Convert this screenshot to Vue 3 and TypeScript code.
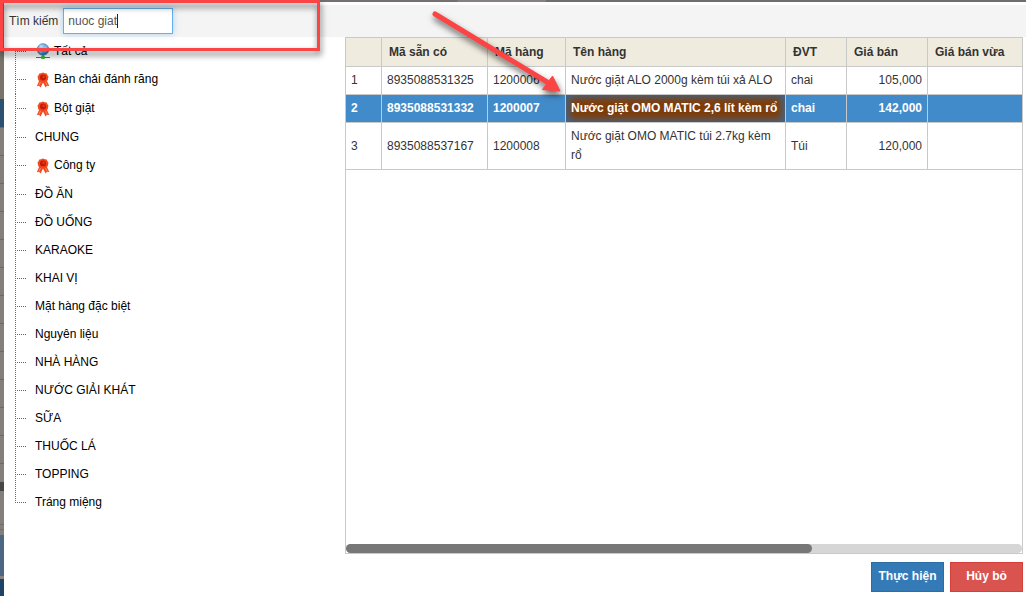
<script setup lang="ts">
import { computed, onMounted, ref } from 'vue'

interface Category {
  name: string
  icon?: 'globe' | 'ribbon'
}

interface Product {
  barcode: string
  code: string
  name: string
  unit: string
  price: string
}

const keyword = ref('nuoc giat')
const selected = ref(1)
const searchBox = ref<HTMLInputElement | null>(null)

const INPUT_INSET = 5
const pen = document.createElement('canvas').getContext('2d')

const caretLeft = computed(() => {
  if (!pen) return `${INPUT_INSET}px`
  pen.font = '12px "Liberation Sans", Arial, sans-serif'
  return `${INPUT_INSET + Math.ceil(pen.measureText(keyword.value).width)}px`
})

const categories: Category[] = [
  { name: 'Tất cả', icon: 'globe' },
  { name: 'Bàn chải đánh răng', icon: 'ribbon' },
  { name: 'Bột giặt', icon: 'ribbon' },
  { name: 'CHUNG' },
  { name: 'Công ty', icon: 'ribbon' },
  { name: 'ĐỒ ĂN' },
  { name: 'ĐỒ UỐNG' },
  { name: 'KARAOKE' },
  { name: 'KHAI VỊ' },
  { name: 'Mặt hàng đặc biệt' },
  { name: 'Nguyên liệu' },
  { name: 'NHÀ HÀNG' },
  { name: 'NƯỚC GIẢI KHÁT' },
  { name: 'SỮA' },
  { name: 'THUỐC LÁ' },
  { name: 'TOPPING' },
  { name: 'Tráng miệng' },
]

const products: Product[] = [
  { barcode: '8935088531325', code: '1200006', name: 'Nước giặt ALO 2000g kèm túi xả ALO', unit: 'chai', price: '105,000' },
  { barcode: '8935088531332', code: '1200007', name: 'Nước giặt OMO MATIC 2,6 lít kèm rổ', unit: 'chai', price: '142,000' },
  { barcode: '8935088537167', code: '1200008', name: 'Nước giặt OMO MATIC túi 2.7kg kèm rổ', unit: 'Túi', price: '120,000' },
]

onMounted(() => searchBox.value?.focus())
</script>

<template>
  <div class="page">
    <div class="backdrop" aria-hidden="true"></div>
    <section class="dialog" role="dialog" aria-label="Tìm kiếm">
      <header class="search">
        <label for="keyword">Tìm kiếm</label>
        <span class="field">
          <input id="keyword" ref="searchBox" v-model="keyword" type="text" autocomplete="off" spellcheck="false" />
          <span class="caret" :style="{ left: caretLeft }"></span>
        </span>
      </header>

      <div class="body">
        <ul class="tree">
          <li v-for="c in categories" :key="c.name" :class="{ leaf: c.icon === 'ribbon' }">
            <span class="branch"></span>
            <svg v-if="c.icon === 'globe'" class="icon" viewBox="0 0 16 16">
              <defs>
                <radialGradient id="globe-fill" cx="40%" cy="30%" r="70%">
                  <stop offset="0" stop-color="#b4dcf8" />
                  <stop offset="0.6" stop-color="#5aa5de" />
                  <stop offset="1" stop-color="#2468ab" />
                </radialGradient>
              </defs>
              <circle cx="8" cy="6.500" r="5.800" fill="url(#globe-fill)" stroke="#3578b5" stroke-width="0.7" />
              <path d="M4 3c2-2 3-1 4-1l-1 2-2 2zM9 4l3-1 1 3-2 3-2-2zM4 8l3 1-1 2z" fill="#d8effc" opacity="0.4" />
              <path d="M1 14.500h14M8 12v2" stroke="#666" stroke-width="1" />
              <rect x="6" y="13" width="4" height="3" rx="1" fill="#35b832" />
            </svg>
            <svg v-else-if="c.icon === 'ribbon'" class="icon" viewBox="0 0 16 16">
              <path d="M4.500 8 1.800 14.200l2.200-.4 1.600 1.800L8 10.500l2.600 5.100 1.300-1.900 2.400.4L11.500 8z" fill="#f24a22" />
              <path d="M5.500 10 4 13.200M10.500 10l1.600 3.200" stroke="#ff9468" stroke-width="0.9" />
              <path d="M8 .6l1.800.7 1.900.2.8 1.700 1 1.500-.5 1.700-.2 1.800-1.600.9L9.800 10.300 8 10l-1.800.3-1.400-1.200-1.600-.9L3 6.400l-.5-1.700 1-1.500.8-1.700 1.900-.2z" fill="#f04a20" />
              <circle cx="8" cy="5.400" r="3" fill="#c81806" />
              <circle cx="8.600" cy="4.800" r="1.200" fill="#e63a1a" />
            </svg>
            <span>{{ c.name }}</span>
          </li>
        </ul>

        <div class="results">
          <div class="grid">
            <table>
              <colgroup>
                <col class="w-index" />
                <col class="w-barcode" />
                <col class="w-code" />
                <col class="w-name" />
                <col class="w-unit" />
                <col class="w-price" />
                <col />
              </colgroup>
              <thead>
                <tr>
                  <th></th>
                  <th>Mã sẵn có</th>
                  <th>Mã hàng</th>
                  <th>Tên hàng</th>
                  <th>ĐVT</th>
                  <th>Giá bán</th>
                  <th>Giá bán vừa</th>
                </tr>
              </thead>
              <tbody>
                <tr v-for="(p, i) in products" :key="p.code" :class="{ selected: i === selected }" @click="selected = i">
                  <td>{{ i + 1 }}</td>
                  <td>{{ p.barcode }}</td>
                  <td>{{ p.code }}</td>
                  <td class="name"><span>{{ p.name }}</span></td>
                  <td>{{ p.unit }}</td>
                  <td class="price">{{ p.price }}</td>
                  <td></td>
                </tr>
              </tbody>
            </table>
            <div class="scroll-track"><div class="scroll-thumb"></div></div>
          </div>
          <footer class="actions">
            <button type="button" class="primary">Thực hiện</button>
            <button type="button" class="danger">Hủy bỏ</button>
          </footer>
        </div>
      </div>
    </section>

    <div class="callout" aria-hidden="true"></div>
    <svg class="arrow" viewBox="0 0 150 100" aria-hidden="true">
      <path d="M11 10 123 78" stroke="#fb4545" stroke-width="5" stroke-linecap="round" />
      <path d="M128.500 72 136 87 118.500 85.500z" fill="#fb4545" stroke="#fb4545" stroke-width="1" />
    </svg>
  </div>
</template>

<style>
body {
  margin: 0;
}
</style>

<style scoped>
.page {
  box-sizing: border-box;
  position: relative;
  display: flex;
  min-height: 100vh;
  padding-top: 2px;
  overflow: hidden;
  background: linear-gradient(90deg, #767171 0 458px, #858181 458px 546px, #706d6d 546px) top / 100% 2px no-repeat #fff;
  color: #333;
  font: 12px/19px "Liberation Sans", Arial, sans-serif;
}

.backdrop {
  flex: none;
  width: 4px;
  margin-bottom: 8px;
  background: linear-gradient(
      #78736b 0 97px,
      #2b5072 97px 125px,
      transparent 125px 480px,
      #484644 480px 489px,
      #827f7c 489px 522px,
      #716e6c 522px 523px,
      #827f7c 523px 527px,
      #716e6c 527px 528px,
      #827f7c 528px 533px,
      #4c6783 533px 574px,
      #85827f 574px 577px,
      #1e4268 577px
    ),
    repeating-linear-gradient(#827f7c 0 13px, #6b6866 13px 14px, #827f7c 14px 28px);
}

.dialog {
  display: flex;
  flex: 1;
  flex-direction: column;
  min-width: 0;
  padding-top: 3px;
  background: #fff;
}

.search {
  display: flex;
  align-items: center;
  gap: 5px;
  height: 32px;
  padding-left: 5px;
  background: #f4f4f4;
}

.field {
  position: relative;
  display: flex;
}

.field input {
  box-sizing: border-box;
  width: 110px;
  height: 26px;
  padding: 0 4px;
  border: 1px solid #66afe9;
  outline: none;
  background: #fff;
  box-shadow: 0 0 6px rgba(102, 175, 233, 0.5);
  caret-color: transparent;
  color: #555;
  font: inherit;
}

.caret {
  position: absolute;
  top: 6px;
  width: 1px;
  height: 14px;
  background: #222;
  pointer-events: none;
}

.body {
  display: flex;
  flex: 1;
}

.tree {
  flex: none;
  width: 341px;
  margin: 0;
  padding: 0;
  color: #000;
  list-style: none;
}

.tree li {
  display: flex;
  align-items: center;
  height: 28px;
  padding-left: 11px;
}

.tree li.leaf {
  height: 29px;
}

.branch {
  align-self: stretch;
  width: 11px;
  margin-right: 9px;
  background: repeating-linear-gradient(90deg, #666 0 1px, transparent 1px 2px) 0 14px / 100% 1px no-repeat,
    repeating-linear-gradient(#666 0 1px, transparent 1px 2px) 0 0 / 1px 100% no-repeat;
}

.tree li:first-child .branch {
  background-position: 0 14px;
}

.tree li:last-child .branch {
  background-size: 100% 1px, 1px 14px;
}

.icon {
  width: 16px;
  height: 16px;
  margin-right: 3px;
}

.results {
  display: flex;
  flex: 1;
  flex-direction: column;
  min-width: 0;
  padding: 0 3px 12px 0;
}

.grid {
  display: flex;
  flex: 1;
  flex-direction: column;
  justify-content: space-between;
  border: 1px solid #c9c9c9;
}

table {
  width: 100%;
  border-spacing: 0;
  table-layout: fixed;
}

.w-index { width: 36px; }
.w-barcode { width: 106px; }
.w-code { width: 78px; }
.w-name { width: 220px; }
.w-unit { width: 61px; }
.w-price { width: 81px; }

th,
td {
  padding: 4px 5px;
  border-right: 1px solid #c9c9c9;
  border-bottom: 1px solid #c9c9c9;
  text-align: left;
}

th {
  padding: 5px 4px 4px 7px;
  background: #efebdf;
  white-space: nowrap;
}

th:last-child,
td:last-child {
  border-right: 0;
}

.price {
  text-align: right;
}

.selected td {
  background: #428bca;
  color: #fff;
  font-weight: bold;
}

.selected .name {
  overflow: hidden;
  background: #456482;
  white-space: nowrap;
}

.selected .name span {
  position: relative;
  z-index: 0;
  display: block;
}

/* soft glow behind the highlighted product name */
.selected .name span::before {
  position: absolute;
  z-index: -1;
  inset: 0;
  background: #7f3c08;
  box-shadow: 0 0 3px 1px #7f3c08;
  content: "";
  filter: blur(3px);
}

.scroll-track {
  height: 9px;
  border-radius: 5px;
  background: #d6d6d6;
}

.scroll-thumb {
  width: 69%;
  height: 100%;
  border-radius: 5px;
  background: #777;
}

.actions {
  display: flex;
  justify-content: flex-end;
  gap: 6px;
  padding-top: 8px;
}

.actions button {
  box-sizing: border-box;
  width: 73px;
  height: 30px;
  padding: 0 0 2px;
  border: 1px solid #2e6da4;
  background: #337ab7;
  color: #fff;
  font: bold 12px/19px "Liberation Sans", Arial, sans-serif;
}

.actions .danger {
  border-color: #d43f3a;
  background: #d9534f;
}

.callout {
  position: absolute;
  top: 0;
  left: 0;
  box-sizing: border-box;
  width: 320px;
  height: 51px;
  border: 3px solid #fb4545;
  filter: drop-shadow(1px 4px 3px rgba(0, 0, 0, 0.6));
  pointer-events: none;
}

.arrow {
  position: absolute;
  top: 4px;
  left: 424px;
  width: 150px;
  height: 100px;
  filter: drop-shadow(1px 4px 3px rgba(0, 0, 0, 0.6));
  pointer-events: none;
}
</style>
